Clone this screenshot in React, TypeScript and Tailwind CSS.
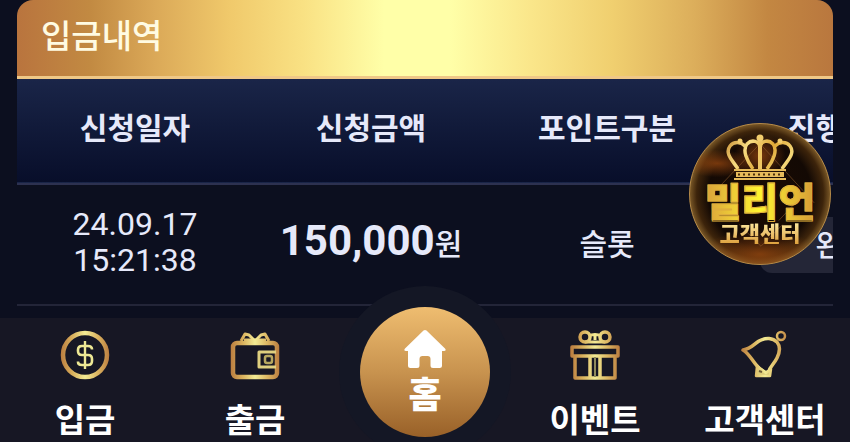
import { FC, ReactNode } from "react";

type Deposit = {
  date: string;
  time: string;
  amount: string;
  type: string;
  status: string;
};

const columns = ["신청일자", "신청금액", "포인트구분", "진행상태"];

const deposits: Deposit[] = [
  {
    date: "24.09.17",
    time: "15:21:38",
    amount: "150,000",
    type: "슬롯",
    status: "완료",
  },
];

//Nav icons ===========================
const GoldIcon: FC<{ id: string; children: ReactNode }> = ({ id, children }) => (
  <svg
    viewBox="0 0 50 50"
    className="size-[50px]"
    fill="none"
    stroke={`url(#${id})`}
    strokeWidth="3.5"
    strokeLinejoin="round"
    aria-hidden="true"
  >
    <defs>
      <linearGradient
        id={id}
        gradientUnits="userSpaceOnUse"
        x1="0"
        y1="0"
        x2="50"
        y2="0"
      >
        <stop offset="0" stopColor="#b97a3e" />
        <stop offset="0.25" stopColor="#d9b05c" />
        <stop offset="0.5" stopColor="#f3eb94" />
        <stop offset="0.75" stopColor="#dcb662" />
        <stop offset="1" stopColor="#b97a3e" />
      </linearGradient>
    </defs>
    {children}
  </svg>
);

const CoinIcon = () => (
  <GoldIcon id="gold-coin">
    <circle cx="25" cy="25" r="22" strokeWidth="4.5" />
    <path
      d="M32 19.5V19q0-3-4-3h-6q-4 0-4 4v1q0 4 4 4h6q4 0 4 4v2q0 4-4 4h-6q-4 0-4-3v-.5"
      stroke="#eee895"
      strokeWidth="2.6"
    />
    <path d="M25 11v28" stroke="#eee895" strokeWidth="2.4" />
  </GoldIcon>
);

const WalletIcon = () => (
  <GoldIcon id="gold-wallet">
    <rect x="3" y="13" width="44" height="34" rx="4" strokeWidth="4.5" />
    <path d="M11 11l4-7 4 1 6 6 6-6 4-1 4 7" strokeWidth="3" />
    <path d="M14 10h22" strokeWidth="3" />
    <path d="M46 22H29v15h17" stroke="#dfd07f" strokeWidth="3" />
    <rect
      x="35"
      y="26"
      width="7"
      height="7"
      rx="2"
      stroke="#b6a75f"
      strokeWidth="2.5"
    />
  </GoldIcon>
);

const GiftIcon = () => (
  <GoldIcon id="gold-gift">
    <circle cx="15" cy="7" r="5" />
    <circle cx="35" cy="7" r="5" />
    <path d="M19 6c3-2 9-2 12 0M15 12h20M25 6v4" strokeWidth="3" />
    <rect x="2" y="17" width="46" height="9" />
    <path d="M5 26v22h40V26M20 26v22M30 26v22" />
    <path d="M25 27v20" stroke="#8f8a5c" strokeWidth="2" />
  </GoldIcon>
);

const BellIcon = () => (
  <GoldIcon id="gold-bell">
    <circle cx="41" cy="6" r="4" strokeWidth="2.5" />
    <path d="M3 20c8-1 11-6 16-9 7-4 14-3 18 1 4 5 2 12 0 16-3 6-7 9-8 13l-3 2-6-4C13 33 10 24 3 20Z" />
    <path d="M17 36l-1 10h14l1-7-5 4Z" fill="#dccb78" strokeWidth="2.5" />
    <path d="M19 41l3 1" stroke="#6b5a34" strokeWidth="2" />
  </GoldIcon>
);

const HomeIcon = () => (
  <svg viewBox="0 0 44 40" className="h-10 w-11" aria-hidden="true">
    <path
      d="M20.5 1.5a2.500 2.500 0 0 1 3 0L42 19.500c1.200 1.200.8 2.500-1 2.500h-2v14.500a2.500 2.500 0 0 1-2.500 2.500H30a2.500 2.500 0 0 1-2.500-2.500V30q0-3-3-3h-5q-3 0-3 3v6.500A2.500 2.500 0 0 1 14 39H7.500A2.500 2.500 0 0 1 5 36.500V22H3c-1.800 0-2.200-1.300-1-2.500Z"
      fill="#fff"
    />
  </svg>
);

const CrownIcon = () => (
  <svg
    viewBox="0 0 68 46"
    className="h-[46px] w-[68px]"
    fill="none"
    stroke="url(#crown)"
    strokeWidth="3.5"
    aria-hidden="true"
  >
    <defs>
      <linearGradient
        id="crown"
        gradientUnits="userSpaceOnUse"
        x1="0"
        y1="0"
        x2="68"
        y2="46"
      >
        <stop offset="0" stopColor="#c4872d" />
        <stop offset="0.3" stopColor="#f7dc82" />
        <stop offset="0.55" stopColor="#e0a936" />
        <stop offset="0.8" stopColor="#f5d878" />
        <stop offset="1" stopColor="#b87a25" />
      </linearGradient>
    </defs>
    <path d="M12 35C8 28-2 20 4 12c4-5 11-4 15 0" />
    <path d="M56 35c4-7 14-15 8-23-4-5-11-4-15 0" />
    <path d="M27 35c-6-8-11-19-6-25 5-5 12-3 13 3 1-6 8-8 13-3 5 6 0 17-6 25" />
    <path d="M34 7v28" stroke="#eec562" strokeWidth="4" />
    <g fill="#f2cd6d" stroke="none">
      <circle cx="34" cy="4" r="3.5" />
      <circle cx="14" cy="7" r="2.5" />
      <circle cx="54" cy="7" r="2.5" />
    </g>
    <path d="M8 36h52M8 45h52" stroke="#e6bb5b" strokeWidth="2" />
    <path d="M10 40.5h48" stroke="#e6bb5b" strokeWidth="5" />
    <path
      d="M12 40.5h44"
      stroke="#4a2c0c"
      strokeWidth="2"
      strokeDasharray="2 3"
    />
  </svg>
);

//Floating support badge ===============
const SupportBadge = () => (
  <a
    href="#support"
    className="absolute top-[123px] right-[19px] z-20 flex size-[142px] flex-col items-center overflow-hidden rounded-full border border-[#b58a48] bg-[radial-gradient(circle,#1a0b03_0%,#130904_52%,#3d240b_64%,#7a5827_71%)] pt-[10px]"
  >
    <svg
      viewBox="0 0 142 142"
      className="absolute inset-0 size-full"
      fill="none"
      aria-hidden="true"
    >
      <defs>
        <radialGradient id="glow">
          <stop offset="0" stopColor="#a04b10" stopOpacity="0.7" />
          <stop offset="1" stopColor="#a04b10" stopOpacity="0" />
        </radialGradient>
      </defs>
      <ellipse cx="28" cy="40" rx="36" ry="14" fill="url(#glow)" />
      <ellipse cx="71" cy="32" rx="26" ry="22" fill="url(#glow)" />
      <ellipse cx="71" cy="132" rx="62" ry="24" fill="url(#glow)" />
      <path
        d="M71 20L20 74M71 20l55 60M50 102l22 22 22-22M90 98l28-30"
        stroke="#a06a35"
        strokeOpacity="0.5"
      />
    </svg>
    <span className="relative">
      <CrownIcon />
    </span>
    <span className="relative bg-linear-to-r from-[#d9a23a] via-[#fff52e] to-[#d59b35] bg-clip-text text-[40px] leading-[40px] font-black whitespace-nowrap text-transparent [-webkit-text-stroke:1px_#dfae3d]">
      밀리언
    </span>
    <span className="relative bg-linear-to-b from-[#fff0a8] to-[#dda13c] bg-clip-text text-[22px] leading-[24px] font-black whitespace-nowrap text-transparent">
      고객센터
    </span>
  </a>
);

const NavItem: FC<{ href: string; label: string; icon: ReactNode }> = ({
  href,
  label,
  icon,
}) => (
  <a
    href={href}
    className="flex flex-1 flex-col items-center gap-4 pt-3 text-[33px] leading-[44px] font-bold whitespace-nowrap text-white"
  >
    {icon}
    <span>{label}</span>
  </a>
);

const App: FC = () => {
  return (
    <div className="relative flex min-h-screen flex-col overflow-hidden bg-[#0c0f1f] font-['Noto_Sans_CJK_KR',sans-serif] text-[#e6e9fa]">
      <main className="px-[17px]">
        <section className="overflow-hidden rounded-t-2xl">
          <h1 className="border-b-3 border-[#efc887] bg-[linear-gradient(90deg,#b9743e_0%,#c28a42_9%,#dba958_17%,#f0c96b_26%,#f9e183_35%,#ffffa8_45%,#ffffa8_53%,#fae68a_63%,#f0cf6f_73%,#dcae5b_83%,#c38742_92%,#b9773e_100%)] px-6 pt-[10px] pb-[18px] text-[33px] leading-[48px] font-medium text-[#fffbe2]">
            입금내역
          </h1>
          <table className="w-[944px] table-fixed border-collapse text-center text-[30px] leading-[36px]">
            <thead>
              <tr className="h-[105px] border-b-2 border-[#2d3150] bg-linear-to-b from-[#1a2548] to-[#080e2a]">
                {columns.map((name) => (
                  <th key={name} className="pb-[10px] font-bold">
                    {name}
                  </th>
                ))}
              </tr>
            </thead>
            <tbody>
              {deposits.map((item) => (
                <tr
                  key={item.time}
                  className="h-[121px] border-b-2 border-[#232538] font-medium"
                >
                  <td className="pb-1.5 font-[Roboto,sans-serif] text-[32px] font-normal">
                    {item.date}
                    <br />
                    {item.time}
                  </td>
                  <td className="pb-1.5 whitespace-nowrap">
                    <span className="font-[Roboto,sans-serif] text-[42px] font-bold">
                      {item.amount}
                    </span>
                    원
                  </td>
                  <td className="pb-1.5">{item.type}</td>
                  <td>
                    <span className="inline-block w-[166px] rounded-xl bg-[#242637] pt-2 pb-3">
                      {item.status}
                    </span>
                  </td>
                </tr>
              ))}
            </tbody>
          </table>
        </section>
      </main>

      <SupportBadge />

      {/**Bottom navigation ======================== */}
      <nav className="relative mt-3 flex flex-1 bg-[#171724]">
        <NavItem href="#deposit" label="입금" icon={<CoinIcon />} />
        <NavItem href="#withdraw" label="출금" icon={<WalletIcon />} />
        <div className="relative flex-1">
          <div className="absolute -top-8 left-1/2 size-[172px] -translate-x-1/2 rounded-full bg-[#141725]" />
          <a
            href="#home"
            className="absolute -top-[11px] left-1/2 flex size-[130px] -translate-x-1/2 flex-col items-center rounded-full bg-linear-to-b from-[#efbd70] via-[#c8934f] to-[#996128] pt-[22px] text-4xl leading-[46px] font-black text-white"
          >
            <HomeIcon />
            홈
          </a>
        </div>
        <NavItem href="#event" label="이벤트" icon={<GiftIcon />} />
        <NavItem href="#support" label="고객센터" icon={<BellIcon />} />
      </nav>
    </div>
  );
};

export default App;
